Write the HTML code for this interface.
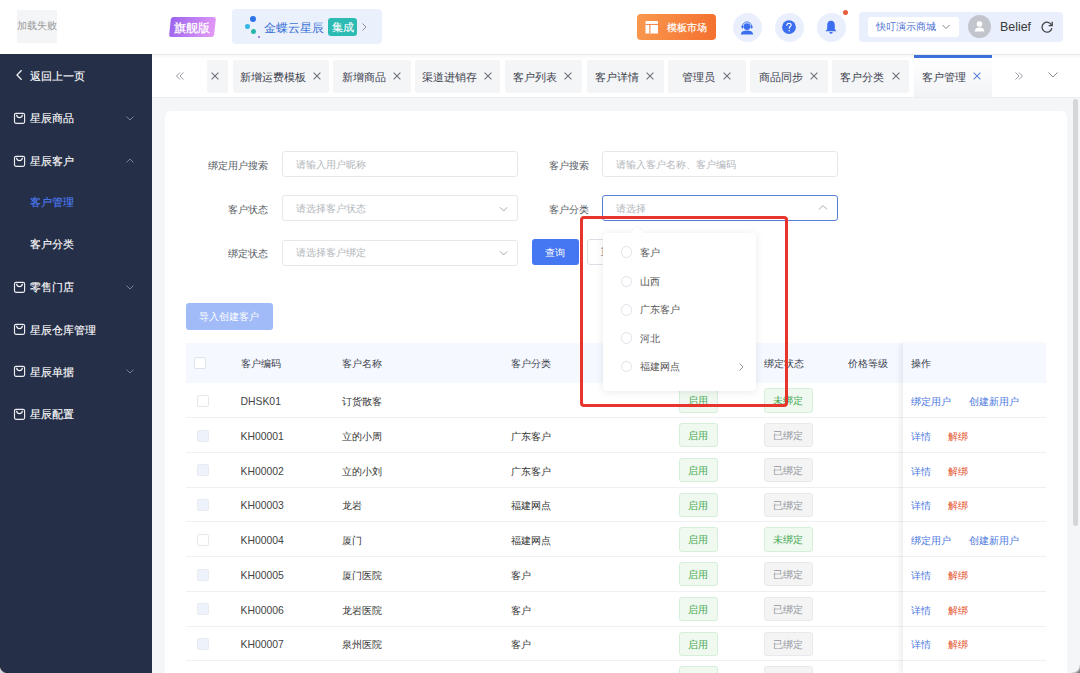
<!DOCTYPE html>
<html><head><meta charset="utf-8"><style>
*{box-sizing:border-box;margin:0;padding:0}
html,body{width:1080px;height:673px;overflow:hidden;background:#f5f6f8;font-family:"Liberation Sans",sans-serif;color:#333}
.a{position:absolute}
.t{position:absolute;white-space:nowrap;line-height:14px;font-size:10px}
</style></head><body>
<div class="a" style="left:0;top:0;width:1080px;height:54px;background:#fff;z-index:3">
<div class="a" style="left:17px;top:10px;width:40px;height:33px;background:#f4f5f7"></div>
<div class="t" style="left:17px;top:20px;font-size:10px;line-height:12px;color:#9a9a9a">加载失败</div>
<div class="a" style="left:169.5px;top:17px;width:44.5px;height:19.7px;background:linear-gradient(105deg,#9a62ef,#e59bf6);transform:skewX(-6deg);border-radius:2.5px"></div>
<div class="t" style="left:169.3px;top:17.5px;width:44.5px;height:20px;line-height:20px;text-align:center;font-size:12px;color:#fff;-webkit-text-stroke:.25px #fff">旗舰版</div>
<div class="a" style="left:232px;top:9px;width:150px;height:35px;background:#ebf0fd;border-radius:4px"></div>
<div class="a" style="left:249.7px;top:15.6px;width:6.6px;height:6.6px;border-radius:50%;background:#2a74e8"></div>
<div class="a" style="left:245px;top:24px;width:4.5px;height:4.5px;border-radius:50%;background:#35b8e8"></div>
<div class="a" style="left:250.5px;top:28.5px;width:5px;height:5px;border-radius:50%;background:#27b5a8"></div>
<div class="a" style="left:258px;top:35.5px;width:2.4px;height:2.4px;border-radius:50%;background:#9a5ad8"></div>
<div class="t" style="left:264px;top:20px;font-size:12px;line-height:16px;color:#3a74d6">金蝶云星辰</div>
<div class="t" style="left:328px;top:18px;width:29px;height:18px;border-radius:3px;background:#2cbbb3;color:#fff;font-size:11px;line-height:18px;text-align:center;-webkit-text-stroke:.1px #fff">集成</div>
<svg class="a" style="left:360px;top:22px" width="9" height="10" viewBox="0 0 9 10"><path d="M2.5 1.5 L6 5 L2.5 8.5" fill="none" stroke="#8a8d93" stroke-width="1"/></svg>
<div class="a" style="left:637px;top:14px;width:79px;height:26px;border-radius:4px;background:linear-gradient(100deg,#f9984e,#f4702f)"></div>
<svg class="a" style="left:645px;top:20px" width="14" height="14" viewBox="0 0 14 14"><rect x="0.5" y="1" width="12.5" height="12.5" fill="#fff"/><rect x="0.5" y="3.9" width="12.5" height="1.1" fill="#f7884b"/><rect x="4.3" y="5" width="1.1" height="8.5" fill="#f7884b"/></svg>
<div class="t" style="left:666.8px;top:21px;font-size:10px;line-height:14px;color:#fff;-webkit-text-stroke:.2px #fff">模板市场</div>
<div class="a" style="left:732.5px;top:12.5px;width:29px;height:29px;border-radius:50%;background:#e9effd"></div>
<div class="a" style="left:774.5px;top:12.5px;width:29px;height:29px;border-radius:50%;background:#e9effd"></div>
<div class="a" style="left:816.5px;top:12.5px;width:29px;height:29px;border-radius:50%;background:#e9effd"></div>
<svg class="a" style="left:739px;top:19px" width="16" height="16" viewBox="0 0 16 16">
<circle cx="8" cy="7.6" r="3.4" fill="#3b6ff0"/>
<path d="M3.4 7.5 A4.6 4.6 0 0 1 12.6 7.5" fill="none" stroke="#3b6ff0" stroke-width=".9"/>
<rect x="2.5" y="6.5" width="1.8" height="3" rx=".8" fill="#3b6ff0"/><rect x="11.7" y="6.5" width="1.8" height="3" rx=".8" fill="#3b6ff0"/>
<path d="M1.8 15.4 C2.2 12.6 4.5 11.6 8 11.6 C11.5 11.6 13.8 12.6 14.2 15.4 Z" fill="#3b6ff0"/></svg>
<svg class="a" style="left:781px;top:19px" width="16" height="16" viewBox="0 0 16 16">
<circle cx="8" cy="8.2" r="6.9" fill="#3b6ff0"/>
<path d="M5.9 6.3 C5.9 4.9 6.8 4.2 8 4.2 C9.3 4.2 10.1 5 10.1 6 C10.1 7.4 8.2 7.6 8.2 9.3" fill="none" stroke="#fff" stroke-width="1.15" stroke-linecap="round"/>
<circle cx="8.2" cy="11.7" r=".75" fill="#fff"/></svg>
<svg class="a" style="left:823px;top:19px" width="16" height="16" viewBox="0 0 16 16">
<path d="M8 1.8 C5.3 1.8 4.2 3.8 4.2 6.3 L4.2 10.3 L2.4 12.3 L13.6 12.3 L11.8 10.3 L11.8 6.3 C11.8 3.8 10.7 1.8 8 1.8 Z" fill="#3b6ff0"/>
<path d="M6.3 13 A1.7 1.7 0 0 0 9.7 13 Z" fill="#3b6ff0"/></svg>
<div class="a" style="left:842.7px;top:9.8px;width:5px;height:5px;border-radius:50%;background:#ea5a3c"></div>
<div class="a" style="left:859px;top:12px;width:204px;height:29.5px;border-radius:4px;background:#e9effd"></div>
<div class="a" style="left:867.5px;top:17px;width:91.5px;height:19.5px;border-radius:3px;background:#fff"></div>
<div class="t" style="left:876px;top:20px;font-size:10px;line-height:14px;color:#4b6fd4">快叮演示商城</div>
<svg class="a" style="left:941px;top:23px" width="10" height="8" viewBox="0 0 10 8"><path d="M1.5 2 L5 5.5 L8.5 2" fill="none" stroke="#888" stroke-width="1"/></svg>
<div class="a" style="left:968px;top:15px;width:23px;height:23px;border-radius:50%;background:#c2c5cc"></div>
<svg class="a" style="left:972px;top:19px" width="15" height="15" viewBox="0 0 15 15"><circle cx="7.5" cy="5" r="2.8" fill="#fff"/><path d="M2.8 12.5 C2.8 9.6 5 8.6 7.5 8.6 C10 8.6 12.2 9.6 12.2 12.5 Z" fill="#fff"/></svg>
<div class="t" style="left:1000px;top:19px;font-size:12.4px;line-height:16px;color:#3a3a3a">Belief</div>
<svg class="a" style="left:1040px;top:20px" width="14" height="14" viewBox="0 0 14 14"><path d="M11.6 5.2 A5 5 0 1 0 11.9 8.2" fill="none" stroke="#444" stroke-width="1.3"/><path d="M12.2 1.8 L12.2 5.6 L8.6 5.6" fill="none" stroke="#444" stroke-width="1.3"/></svg>
</div>
<div class="a" style="left:0;top:54px;width:152px;height:619px;background:#262f48;z-index:2;border-bottom-left-radius:6px">
<div class="t" style="left:30.4px;top:13.6px;font-size:11px;line-height:16px;color:#fff;-webkit-text-stroke:.12px #fff">返回上一页</div>
<svg class="a" style="left:14px;top:14.5px" width="10" height="12" viewBox="0 0 10 12"><path d="M7.6 1.3 L3 6 L7.6 10.7" fill="none" stroke="#f2f3f7" stroke-width="1.25"/></svg>
<div class="t" style="left:30.4px;top:56.1px;font-size:11px;line-height:16px;color:#fff;-webkit-text-stroke:.12px #fff">星辰商品</div>
<svg class="a" style="left:13px;top:58px" width="13" height="13" viewBox="0 0 13 13"><rect x="1.5" y="1.3" width="10.1" height="10" rx="1.5" fill="none" stroke="#eceef3" stroke-width="1.15"/><path d="M3.6 2.7 C3.8 6.6 9.2 6.6 9.4 2.7" fill="none" stroke="#fff" stroke-width="1.15"/></svg>
<svg class="a" style="left:125px;top:59.5px" width="10" height="8" viewBox="0 0 10 8"><path d="M1.5 2.5 L5 6 L8.5 2.5" fill="none" stroke="#7b8296" stroke-width="1"/></svg>
<div class="t" style="left:30.4px;top:98.9px;font-size:11px;line-height:16px;color:#fff;-webkit-text-stroke:.12px #fff">星辰客户</div>
<svg class="a" style="left:13px;top:101px" width="13" height="13" viewBox="0 0 13 13"><rect x="1.5" y="1.3" width="10.1" height="10" rx="1.5" fill="none" stroke="#eceef3" stroke-width="1.15"/><path d="M3.6 2.7 C3.8 6.6 9.2 6.6 9.4 2.7" fill="none" stroke="#fff" stroke-width="1.15"/></svg>
<svg class="a" style="left:125px;top:102.8px" width="10" height="8" viewBox="0 0 10 8"><path d="M1.5 5.5 L5 2 L8.5 5.5" fill="none" stroke="#7b8296" stroke-width="1"/></svg>
<div class="t" style="left:30.4px;top:139.9px;font-size:11px;line-height:16px;color:#4c7df5;-webkit-text-stroke:.12px #4c7df5">客户管理</div>
<div class="t" style="left:30.4px;top:182.1px;font-size:11px;line-height:16px;color:#fff;-webkit-text-stroke:.12px #fff">客户分类</div>
<div class="t" style="left:30.4px;top:225.1px;font-size:11px;line-height:16px;color:#fff;-webkit-text-stroke:.12px #fff">零售门店</div>
<svg class="a" style="left:13px;top:227px" width="13" height="13" viewBox="0 0 13 13"><rect x="1.5" y="1.3" width="10.1" height="10" rx="1.5" fill="none" stroke="#eceef3" stroke-width="1.15"/><path d="M3.6 2.7 C3.8 6.6 9.2 6.6 9.4 2.7" fill="none" stroke="#fff" stroke-width="1.15"/></svg>
<svg class="a" style="left:125px;top:228.5px" width="10" height="8" viewBox="0 0 10 8"><path d="M1.5 2.5 L5 6 L8.5 2.5" fill="none" stroke="#7b8296" stroke-width="1"/></svg>
<div class="t" style="left:30.4px;top:267.5px;font-size:11px;line-height:16px;color:#fff;-webkit-text-stroke:.12px #fff">星辰仓库管理</div>
<svg class="a" style="left:13px;top:269px" width="13" height="13" viewBox="0 0 13 13"><rect x="1.5" y="1.3" width="10.1" height="10" rx="1.5" fill="none" stroke="#eceef3" stroke-width="1.15"/><path d="M3.6 2.7 C3.8 6.6 9.2 6.6 9.4 2.7" fill="none" stroke="#fff" stroke-width="1.15"/></svg>
<div class="t" style="left:30.4px;top:309.5px;font-size:11px;line-height:16px;color:#fff;-webkit-text-stroke:.12px #fff">星辰单据</div>
<svg class="a" style="left:13px;top:311px" width="13" height="13" viewBox="0 0 13 13"><rect x="1.5" y="1.3" width="10.1" height="10" rx="1.5" fill="none" stroke="#eceef3" stroke-width="1.15"/><path d="M3.6 2.7 C3.8 6.6 9.2 6.6 9.4 2.7" fill="none" stroke="#fff" stroke-width="1.15"/></svg>
<svg class="a" style="left:125px;top:312.9px" width="10" height="8" viewBox="0 0 10 8"><path d="M1.5 2.5 L5 6 L8.5 2.5" fill="none" stroke="#7b8296" stroke-width="1"/></svg>
<div class="t" style="left:30.4px;top:351.6px;font-size:11px;line-height:16px;color:#fff;-webkit-text-stroke:.12px #fff">星辰配置</div>
<svg class="a" style="left:13px;top:354px" width="13" height="13" viewBox="0 0 13 13"><rect x="1.5" y="1.3" width="10.1" height="10" rx="1.5" fill="none" stroke="#eceef3" stroke-width="1.15"/><path d="M3.6 2.7 C3.8 6.6 9.2 6.6 9.4 2.7" fill="none" stroke="#fff" stroke-width="1.15"/></svg>
</div>
<div class="a" style="left:152px;top:54px;width:928px;height:44px;background:#fff;border-bottom:1px solid #eceef1"></div>
<div class="a" style="left:206.9px;top:60px;width:21.2px;height:33.3px;background:#f4f5f7;border-radius:3px"></div>
<svg class="a" style="left:210.85px;top:72.4px" width="8" height="8" viewBox="0 0 8 8"><path d="M.6 .6 L7.4 7.4 M7.4 .6 L.6 7.4" stroke="#6c7078" stroke-width="1.05"/></svg>
<div class="a" style="left:233.1px;top:60px;width:95.7px;height:33.3px;background:#f4f5f7;border-radius:3px"></div>
<div class="t" style="left:239.75px;top:69.5px;font-size:11px;line-height:15px;color:#3d4350">新增运费模板</div>
<svg class="a" style="left:312.6px;top:72.4px" width="8" height="8" viewBox="0 0 8 8"><path d="M.6 .6 L7.4 7.4 M7.4 .6 L.6 7.4" stroke="#6c7078" stroke-width="1.05"/></svg>
<div class="a" style="left:333.4px;top:60px;width:77.4px;height:33.3px;background:#f4f5f7;border-radius:3px"></div>
<div class="t" style="left:341.7px;top:69.5px;font-size:11px;line-height:15px;color:#3d4350">新增商品</div>
<svg class="a" style="left:393.20000000000005px;top:72.4px" width="8" height="8" viewBox="0 0 8 8"><path d="M.6 .6 L7.4 7.4 M7.4 .6 L.6 7.4" stroke="#6c7078" stroke-width="1.05"/></svg>
<div class="a" style="left:415.2px;top:60px;width:84.6px;height:33.3px;background:#f4f5f7;border-radius:3px"></div>
<div class="t" style="left:422px;top:69.5px;font-size:11px;line-height:15px;color:#3d4350">渠道进销存</div>
<svg class="a" style="left:484.3px;top:72.4px" width="8" height="8" viewBox="0 0 8 8"><path d="M.6 .6 L7.4 7.4 M7.4 .6 L.6 7.4" stroke="#6c7078" stroke-width="1.05"/></svg>
<div class="a" style="left:505px;top:60px;width:76.9px;height:33.3px;background:#f4f5f7;border-radius:3px"></div>
<div class="t" style="left:513px;top:69.5px;font-size:11px;line-height:15px;color:#3d4350">客户列表</div>
<svg class="a" style="left:564.0px;top:72.4px" width="8" height="8" viewBox="0 0 8 8"><path d="M.6 .6 L7.4 7.4 M7.4 .6 L.6 7.4" stroke="#6c7078" stroke-width="1.05"/></svg>
<div class="a" style="left:586.5px;top:60px;width:77.3px;height:33.3px;background:#f4f5f7;border-radius:3px"></div>
<div class="t" style="left:595px;top:69.5px;font-size:11px;line-height:15px;color:#3d4350">客户详情</div>
<svg class="a" style="left:646.3000000000001px;top:72.4px" width="8" height="8" viewBox="0 0 8 8"><path d="M.6 .6 L7.4 7.4 M7.4 .6 L.6 7.4" stroke="#6c7078" stroke-width="1.05"/></svg>
<div class="a" style="left:668.4px;top:60px;width:77.3px;height:33.3px;background:#f4f5f7;border-radius:3px"></div>
<div class="t" style="left:681.9px;top:69.5px;font-size:11px;line-height:15px;color:#3d4350">管理员</div>
<svg class="a" style="left:722.6px;top:72.4px" width="8" height="8" viewBox="0 0 8 8"><path d="M.6 .6 L7.4 7.4 M7.4 .6 L.6 7.4" stroke="#6c7078" stroke-width="1.05"/></svg>
<div class="a" style="left:750.4px;top:60px;width:77.3px;height:33.3px;background:#f4f5f7;border-radius:3px"></div>
<div class="t" style="left:758.7px;top:69.5px;font-size:11px;line-height:15px;color:#3d4350">商品同步</div>
<svg class="a" style="left:809.6px;top:72.4px" width="8" height="8" viewBox="0 0 8 8"><path d="M.6 .6 L7.4 7.4 M7.4 .6 L.6 7.4" stroke="#6c7078" stroke-width="1.05"/></svg>
<div class="a" style="left:832px;top:60px;width:77.3px;height:33.3px;background:#f4f5f7;border-radius:3px"></div>
<div class="t" style="left:840px;top:69.5px;font-size:11px;line-height:15px;color:#3d4350">客户分类</div>
<svg class="a" style="left:891.6px;top:72.4px" width="8" height="8" viewBox="0 0 8 8"><path d="M.6 .6 L7.4 7.4 M7.4 .6 L.6 7.4" stroke="#6c7078" stroke-width="1.05"/></svg>
<div class="a" style="left:914px;top:55px;width:77.5px;height:42px;background:linear-gradient(180deg,#fff 0%,#f2f3f6 100%);border-top:3px solid #3f72de"></div>
<div class="t" style="left:921.8px;top:69.5px;font-size:11px;line-height:15px;color:#3d4350">客户管理</div>
<svg class="a" style="left:973.4px;top:72.4px" width="8" height="8" viewBox="0 0 8 8"><path d="M.6 .6 L7.4 7.4 M7.4 .6 L.6 7.4" stroke="#5b82e0" stroke-width="1.05"/></svg>
<svg class="a" style="left:175px;top:70.5px" width="10" height="10" viewBox="0 0 10 10"><path d="M5 1.5 L1.5 5 L5 8.5 M8.5 1.5 L5 5 L8.5 8.5" fill="none" stroke="#9a9ca2" stroke-width="1"/></svg>
<svg class="a" style="left:1014px;top:70.5px" width="10" height="10" viewBox="0 0 10 10"><path d="M1.5 1.5 L5 5 L1.5 8.5 M5 1.5 L8.5 5 L5 8.5" fill="none" stroke="#9a9ca2" stroke-width="1"/></svg>
<svg class="a" style="left:1047px;top:71px" width="12" height="8" viewBox="0 0 12 8"><path d="M1.5 1.5 L6 6 L10.5 1.5" fill="none" stroke="#888" stroke-width="1"/></svg>
<div class="a" style="left:152px;top:54px;width:928px;height:1px;background:#e8e9eb"></div>
<div class="a" style="left:152px;top:55px;width:928px;height:4px;background:linear-gradient(180deg,rgba(0,0,0,.035),rgba(0,0,0,0))"></div>
<div class="a" style="left:165px;top:110.5px;width:901.5px;height:600px;background:#fff;border-radius:6px"></div>
<div class="t" style="left:168.3px;top:158.8px;width:100px;text-align:right;color:#555a63">绑定用户搜索</div>
<div class="t" style="left:168.3px;top:202.5px;width:100px;text-align:right;color:#555a63">客户状态</div>
<div class="t" style="left:168.3px;top:246.5px;width:100px;text-align:right;color:#555a63">绑定状态</div>
<div class="t" style="left:488.79999999999995px;top:158.8px;width:100px;text-align:right;color:#555a63">客户搜索</div>
<div class="t" style="left:488.79999999999995px;top:202.5px;width:100px;text-align:right;color:#555a63">客户分类</div>
<div class="a" style="left:282.3px;top:151.4px;width:235.5px;height:26px;border:1px solid #e6e7ea;border-radius:3px;background:#fff"></div>
<div class="t" style="left:295.5px;top:157.9px;color:#b3b6bc">请输入用户昵称</div>
<div class="a" style="left:282.3px;top:195.4px;width:235.5px;height:26px;border:1px solid #e6e7ea;border-radius:3px;background:#fff"></div>
<div class="t" style="left:295.5px;top:201.9px;color:#b3b6bc">请选择客户状态</div>
<svg class="a" style="left:498.8px;top:205.9px" width="9" height="7" viewBox="0 0 9 7"><path d="M1 1.3 L4.6 5 L8.2 1.3" fill="none" stroke="#a5a8ae" stroke-width="1"/></svg>
<div class="a" style="left:282.3px;top:239.6px;width:235.5px;height:26px;border:1px solid #e6e7ea;border-radius:3px;background:#fff"></div>
<div class="t" style="left:295.5px;top:246.1px;color:#b3b6bc">请选择客户绑定</div>
<svg class="a" style="left:498.8px;top:250.1px" width="9" height="7" viewBox="0 0 9 7"><path d="M1 1.3 L4.6 5 L8.2 1.3" fill="none" stroke="#a5a8ae" stroke-width="1"/></svg>
<div class="a" style="left:602.4px;top:151.4px;width:235.5px;height:26px;border:1px solid #e6e7ea;border-radius:3px;background:#fff"></div>
<div class="t" style="left:615.6px;top:157.9px;color:#b3b6bc">请输入客户名称、客户编码</div>
<div class="a" style="left:602.4px;top:195.4px;width:235.5px;height:26px;border:1px solid #5b7fd6;border-radius:3px;background:#fff"></div>
<div class="t" style="left:615.6px;top:201.9px;color:#b3b6bc">请选择</div>
<svg class="a" style="left:818.4px;top:204.4px" width="10" height="7" viewBox="0 0 10 7"><path d="M1 5.5 L5 1.5 L9 5.5" fill="none" stroke="#a8abb2" stroke-width="1"/></svg>
<div class="t" style="left:531.6px;top:239.3px;width:47.3px;height:26px;border-radius:3px;background:#4677f2;color:#fff;line-height:27.5px;text-align:center">查询</div>
<div class="t" style="left:587.1px;top:239.2px;width:47.3px;height:26px;border-radius:3px;background:#fff;border:1px solid #dcdfe6;color:#555;line-height:24px;text-align:center">重置</div>
<div class="t" style="left:185.7px;top:303.1px;width:87.3px;height:26.5px;border-radius:3px;background:#a1baf8;color:#fff;line-height:28.8px;text-align:center">导入创建客户</div>
<div class="a" style="left:185.7px;top:343.4px;width:860px;height:40px;background:#f5f8fe"></div>
<div class="a" style="left:194px;top:357.2px;width:12px;height:12px;border:1px solid #dfe2e8;border-radius:2px;background:#fff"></div>
<div class="t" style="left:240.5px;top:357px;color:#3d4350">客户编码</div>
<div class="t" style="left:341.7px;top:357px;color:#3d4350">客户名称</div>
<div class="t" style="left:510.8px;top:357px;color:#3d4350">客户分类</div>
<div class="t" style="left:680px;top:357px;color:#3d4350">状态</div>
<div class="t" style="left:763.6px;top:357px;color:#3d4350">绑定状态</div>
<div class="t" style="left:848px;top:357px;color:#3d4350">价格等级</div>
<div class="a" style="left:185.7px;top:417.15px;width:860px;height:1px;background:#eef0f3"></div>
<div class="a" style="left:197.3px;top:394.77px;width:12px;height:12px;border:1px solid #e5e8ed;border-radius:2px;background:#fff"></div>
<div class="t" style="left:240.5px;top:395.17px;font-size:10.4px;color:#444">DHSK01</div>
<div class="t" style="left:341.7px;top:395.17px;color:#333">订货散客</div>
<div class="t" style="left:679.2px;top:388.47px;width:38.5px;height:24.1px;border:1px solid #d6efd8;border-radius:3px;background:#eff9f0;color:#45a851;line-height:23.6px;text-align:center">启用</div>
<div class="t" style="left:763.6px;top:388.47px;width:49px;height:24.1px;border:1px solid #d6efd8;border-radius:3px;background:#eff9f0;color:#45a851;line-height:23.6px;text-align:center">未绑定</div>
<div class="a" style="left:185.7px;top:451.90px;width:860px;height:1px;background:#eef0f3"></div>
<div class="a" style="left:197.3px;top:429.52px;width:12px;height:12px;border:1px solid #e8ebf1;border-radius:2px;background:#eef2fb"></div>
<div class="t" style="left:240.5px;top:429.92px;font-size:10.4px;color:#444">KH00001</div>
<div class="t" style="left:341.7px;top:429.92px;color:#333">立的小周</div>
<div class="t" style="left:510.8px;top:429.92px;color:#333">广东客户</div>
<div class="t" style="left:679.2px;top:423.22px;width:38.5px;height:24.1px;border:1px solid #d6efd8;border-radius:3px;background:#eff9f0;color:#45a851;line-height:23.6px;text-align:center">启用</div>
<div class="t" style="left:763.6px;top:423.22px;width:49px;height:24.1px;border:1px solid #e8e9ec;border-radius:3px;background:#f4f4f5;color:#93969c;line-height:23.6px;text-align:center">已绑定</div>
<div class="a" style="left:185.7px;top:486.65px;width:860px;height:1px;background:#eef0f3"></div>
<div class="a" style="left:197.3px;top:464.27px;width:12px;height:12px;border:1px solid #e8ebf1;border-radius:2px;background:#eef2fb"></div>
<div class="t" style="left:240.5px;top:464.67px;font-size:10.4px;color:#444">KH00002</div>
<div class="t" style="left:341.7px;top:464.67px;color:#333">立的小刘</div>
<div class="t" style="left:510.8px;top:464.67px;color:#333">广东客户</div>
<div class="t" style="left:679.2px;top:457.97px;width:38.5px;height:24.1px;border:1px solid #d6efd8;border-radius:3px;background:#eff9f0;color:#45a851;line-height:23.6px;text-align:center">启用</div>
<div class="t" style="left:763.6px;top:457.97px;width:49px;height:24.1px;border:1px solid #e8e9ec;border-radius:3px;background:#f4f4f5;color:#93969c;line-height:23.6px;text-align:center">已绑定</div>
<div class="a" style="left:185.7px;top:521.40px;width:860px;height:1px;background:#eef0f3"></div>
<div class="a" style="left:197.3px;top:499.02px;width:12px;height:12px;border:1px solid #e8ebf1;border-radius:2px;background:#eef2fb"></div>
<div class="t" style="left:240.5px;top:499.42px;font-size:10.4px;color:#444">KH00003</div>
<div class="t" style="left:341.7px;top:499.42px;color:#333">龙岩</div>
<div class="t" style="left:510.8px;top:499.42px;color:#333">福建网点</div>
<div class="t" style="left:679.2px;top:492.72px;width:38.5px;height:24.1px;border:1px solid #d6efd8;border-radius:3px;background:#eff9f0;color:#45a851;line-height:23.6px;text-align:center">启用</div>
<div class="t" style="left:763.6px;top:492.72px;width:49px;height:24.1px;border:1px solid #e8e9ec;border-radius:3px;background:#f4f4f5;color:#93969c;line-height:23.6px;text-align:center">已绑定</div>
<div class="a" style="left:185.7px;top:556.15px;width:860px;height:1px;background:#eef0f3"></div>
<div class="a" style="left:197.3px;top:533.77px;width:12px;height:12px;border:1px solid #e5e8ed;border-radius:2px;background:#fff"></div>
<div class="t" style="left:240.5px;top:534.17px;font-size:10.4px;color:#444">KH00004</div>
<div class="t" style="left:341.7px;top:534.17px;color:#333">厦门</div>
<div class="t" style="left:510.8px;top:534.17px;color:#333">福建网点</div>
<div class="t" style="left:679.2px;top:527.48px;width:38.5px;height:24.1px;border:1px solid #d6efd8;border-radius:3px;background:#eff9f0;color:#45a851;line-height:23.6px;text-align:center">启用</div>
<div class="t" style="left:763.6px;top:527.48px;width:49px;height:24.1px;border:1px solid #d6efd8;border-radius:3px;background:#eff9f0;color:#45a851;line-height:23.6px;text-align:center">未绑定</div>
<div class="a" style="left:185.7px;top:590.90px;width:860px;height:1px;background:#eef0f3"></div>
<div class="a" style="left:197.3px;top:568.52px;width:12px;height:12px;border:1px solid #e8ebf1;border-radius:2px;background:#eef2fb"></div>
<div class="t" style="left:240.5px;top:568.92px;font-size:10.4px;color:#444">KH00005</div>
<div class="t" style="left:341.7px;top:568.92px;color:#333">厦门医院</div>
<div class="t" style="left:510.8px;top:568.92px;color:#333">客户</div>
<div class="t" style="left:679.2px;top:562.23px;width:38.5px;height:24.1px;border:1px solid #d6efd8;border-radius:3px;background:#eff9f0;color:#45a851;line-height:23.6px;text-align:center">启用</div>
<div class="t" style="left:763.6px;top:562.23px;width:49px;height:24.1px;border:1px solid #e8e9ec;border-radius:3px;background:#f4f4f5;color:#93969c;line-height:23.6px;text-align:center">已绑定</div>
<div class="a" style="left:185.7px;top:625.65px;width:860px;height:1px;background:#eef0f3"></div>
<div class="a" style="left:197.3px;top:603.27px;width:12px;height:12px;border:1px solid #e8ebf1;border-radius:2px;background:#eef2fb"></div>
<div class="t" style="left:240.5px;top:603.67px;font-size:10.4px;color:#444">KH00006</div>
<div class="t" style="left:341.7px;top:603.67px;color:#333">龙岩医院</div>
<div class="t" style="left:510.8px;top:603.67px;color:#333">客户</div>
<div class="t" style="left:679.2px;top:596.98px;width:38.5px;height:24.1px;border:1px solid #d6efd8;border-radius:3px;background:#eff9f0;color:#45a851;line-height:23.6px;text-align:center">启用</div>
<div class="t" style="left:763.6px;top:596.98px;width:49px;height:24.1px;border:1px solid #e8e9ec;border-radius:3px;background:#f4f4f5;color:#93969c;line-height:23.6px;text-align:center">已绑定</div>
<div class="a" style="left:185.7px;top:660.40px;width:860px;height:1px;background:#eef0f3"></div>
<div class="a" style="left:197.3px;top:638.02px;width:12px;height:12px;border:1px solid #e8ebf1;border-radius:2px;background:#eef2fb"></div>
<div class="t" style="left:240.5px;top:638.42px;font-size:10.4px;color:#444">KH00007</div>
<div class="t" style="left:341.7px;top:638.42px;color:#333">泉州医院</div>
<div class="t" style="left:510.8px;top:638.42px;color:#333">客户</div>
<div class="t" style="left:679.2px;top:631.73px;width:38.5px;height:24.1px;border:1px solid #d6efd8;border-radius:3px;background:#eff9f0;color:#45a851;line-height:23.6px;text-align:center">启用</div>
<div class="t" style="left:763.6px;top:631.73px;width:49px;height:24.1px;border:1px solid #e8e9ec;border-radius:3px;background:#f4f4f5;color:#93969c;line-height:23.6px;text-align:center">已绑定</div>
<div class="a" style="left:185.7px;top:695.15px;width:860px;height:1px;background:#eef0f3"></div>
<div class="a" style="left:197.3px;top:672.77px;width:12px;height:12px;border:1px solid #e8ebf1;border-radius:2px;background:#eef2fb"></div>
<div class="t" style="left:240.5px;top:673.17px;font-size:10.4px;color:#444">KH00008</div>
<div class="t" style="left:510.8px;top:673.17px;color:#333">客户</div>
<div class="t" style="left:679.2px;top:666.48px;width:38.5px;height:24.1px;border:1px solid #d6efd8;border-radius:3px;background:#eff9f0;color:#45a851;line-height:23.6px;text-align:center">启用</div>
<div class="t" style="left:763.6px;top:666.48px;width:49px;height:24.1px;border:1px solid #e8e9ec;border-radius:3px;background:#f4f4f5;color:#93969c;line-height:23.6px;text-align:center">已绑定</div>
<div class="a" style="left:902.6px;top:343.5px;width:143px;height:330px;box-shadow:-3px 0 5px rgba(0,0,0,.07)"></div>
<div class="a" style="left:902.6px;top:343.4px;width:143px;height:40px;background:#f5f8fe"></div>
<div class="t" style="left:911px;top:357px;color:#3d4350">操作</div>
<div class="a" style="left:902.6px;top:383.40px;width:143px;height:34.75px;background:#fff;border-bottom:1px solid #eef0f3"></div>
<div class="t" style="left:911px;top:395.17px;color:#4a77e0">绑定用户</div>
<div class="t" style="left:968.5px;top:395.17px;color:#4a77e0">创建新用户</div>
<div class="a" style="left:902.6px;top:418.15px;width:143px;height:34.75px;background:#fff;border-bottom:1px solid #eef0f3"></div>
<div class="t" style="left:911px;top:429.92px;color:#4a77e0">详情</div>
<div class="t" style="left:948px;top:429.92px;color:#e5532d">解绑</div>
<div class="a" style="left:902.6px;top:452.90px;width:143px;height:34.75px;background:#fff;border-bottom:1px solid #eef0f3"></div>
<div class="t" style="left:911px;top:464.67px;color:#4a77e0">详情</div>
<div class="t" style="left:948px;top:464.67px;color:#e5532d">解绑</div>
<div class="a" style="left:902.6px;top:487.65px;width:143px;height:34.75px;background:#fff;border-bottom:1px solid #eef0f3"></div>
<div class="t" style="left:911px;top:499.42px;color:#4a77e0">详情</div>
<div class="t" style="left:948px;top:499.42px;color:#e5532d">解绑</div>
<div class="a" style="left:902.6px;top:522.40px;width:143px;height:34.75px;background:#fff;border-bottom:1px solid #eef0f3"></div>
<div class="t" style="left:911px;top:534.17px;color:#4a77e0">绑定用户</div>
<div class="t" style="left:968.5px;top:534.17px;color:#4a77e0">创建新用户</div>
<div class="a" style="left:902.6px;top:557.15px;width:143px;height:34.75px;background:#fff;border-bottom:1px solid #eef0f3"></div>
<div class="t" style="left:911px;top:568.92px;color:#4a77e0">详情</div>
<div class="t" style="left:948px;top:568.92px;color:#e5532d">解绑</div>
<div class="a" style="left:902.6px;top:591.90px;width:143px;height:34.75px;background:#fff;border-bottom:1px solid #eef0f3"></div>
<div class="t" style="left:911px;top:603.67px;color:#4a77e0">详情</div>
<div class="t" style="left:948px;top:603.67px;color:#e5532d">解绑</div>
<div class="a" style="left:902.6px;top:626.65px;width:143px;height:34.75px;background:#fff;border-bottom:1px solid #eef0f3"></div>
<div class="t" style="left:911px;top:638.42px;color:#4a77e0">详情</div>
<div class="t" style="left:948px;top:638.42px;color:#e5532d">解绑</div>
<div class="a" style="left:902.6px;top:661.40px;width:143px;height:34.75px;background:#fff;border-bottom:1px solid #eef0f3"></div>
<div class="t" style="left:911px;top:673.17px;color:#4a77e0">详情</div>
<div class="t" style="left:948px;top:673.17px;color:#e5532d">解绑</div>
<div class="a" style="left:602.8px;top:232.5px;width:153px;height:158.5px;background:#fff;border-radius:4px;box-shadow:0 1px 8px rgba(0,0,0,.09)"></div>
<div class="a" style="left:633px;top:228px;width:8px;height:8px;background:#fff;transform:rotate(45deg);box-shadow:-1px -1px 2px rgba(0,0,0,.03)"></div>
<div class="a" style="left:620.5px;top:246.4px;width:11.4px;height:11.4px;border:1px solid #dfe2e8;border-radius:50%;background:#fff"></div>
<div class="t" style="left:640.2px;top:245.6px;color:#555">客户</div>
<div class="a" style="left:620.5px;top:275.5px;width:11.4px;height:11.4px;border:1px solid #dfe2e8;border-radius:50%;background:#fff"></div>
<div class="t" style="left:640.2px;top:274.7px;color:#555">山西</div>
<div class="a" style="left:620.5px;top:304.2px;width:11.4px;height:11.4px;border:1px solid #dfe2e8;border-radius:50%;background:#fff"></div>
<div class="t" style="left:640.2px;top:303.4px;color:#555">广东客户</div>
<div class="a" style="left:620.5px;top:332.3px;width:11.4px;height:11.4px;border:1px solid #dfe2e8;border-radius:50%;background:#fff"></div>
<div class="t" style="left:640.2px;top:331.5px;color:#555">河北</div>
<div class="a" style="left:620.5px;top:361.0px;width:11.4px;height:11.4px;border:1px solid #dfe2e8;border-radius:50%;background:#fff"></div>
<div class="t" style="left:640.2px;top:360.2px;color:#555">福建网点</div>
<svg class="a" style="left:738px;top:362px" width="7" height="10" viewBox="0 0 7 10"><path d="M1.5 1.5 L5 5 L1.5 8.5" fill="none" stroke="#999" stroke-width="1"/></svg>
<div class="a" style="left:580px;top:216px;width:208.4px;height:190.8px;border:3px solid #e7342d;border-radius:4px"></div>
<div class="a" style="left:0;top:665px;width:8px;height:8px;background:radial-gradient(circle at 8px 0,rgba(0,0,0,0) 7px,#1d2233 7.6px,#d9dadc 9px);z-index:5"></div>
<div class="a" style="left:1072px;top:665px;width:8px;height:8px;background:radial-gradient(circle at 0 0,rgba(0,0,0,0) 7px,#9a9a9a 9px,#6a6a6a 11px);z-index:5"></div>
<div class="a" style="left:1073px;top:99px;width:5px;height:427px;border-radius:3px;background:#d5d6d9"></div>
</body></html>
